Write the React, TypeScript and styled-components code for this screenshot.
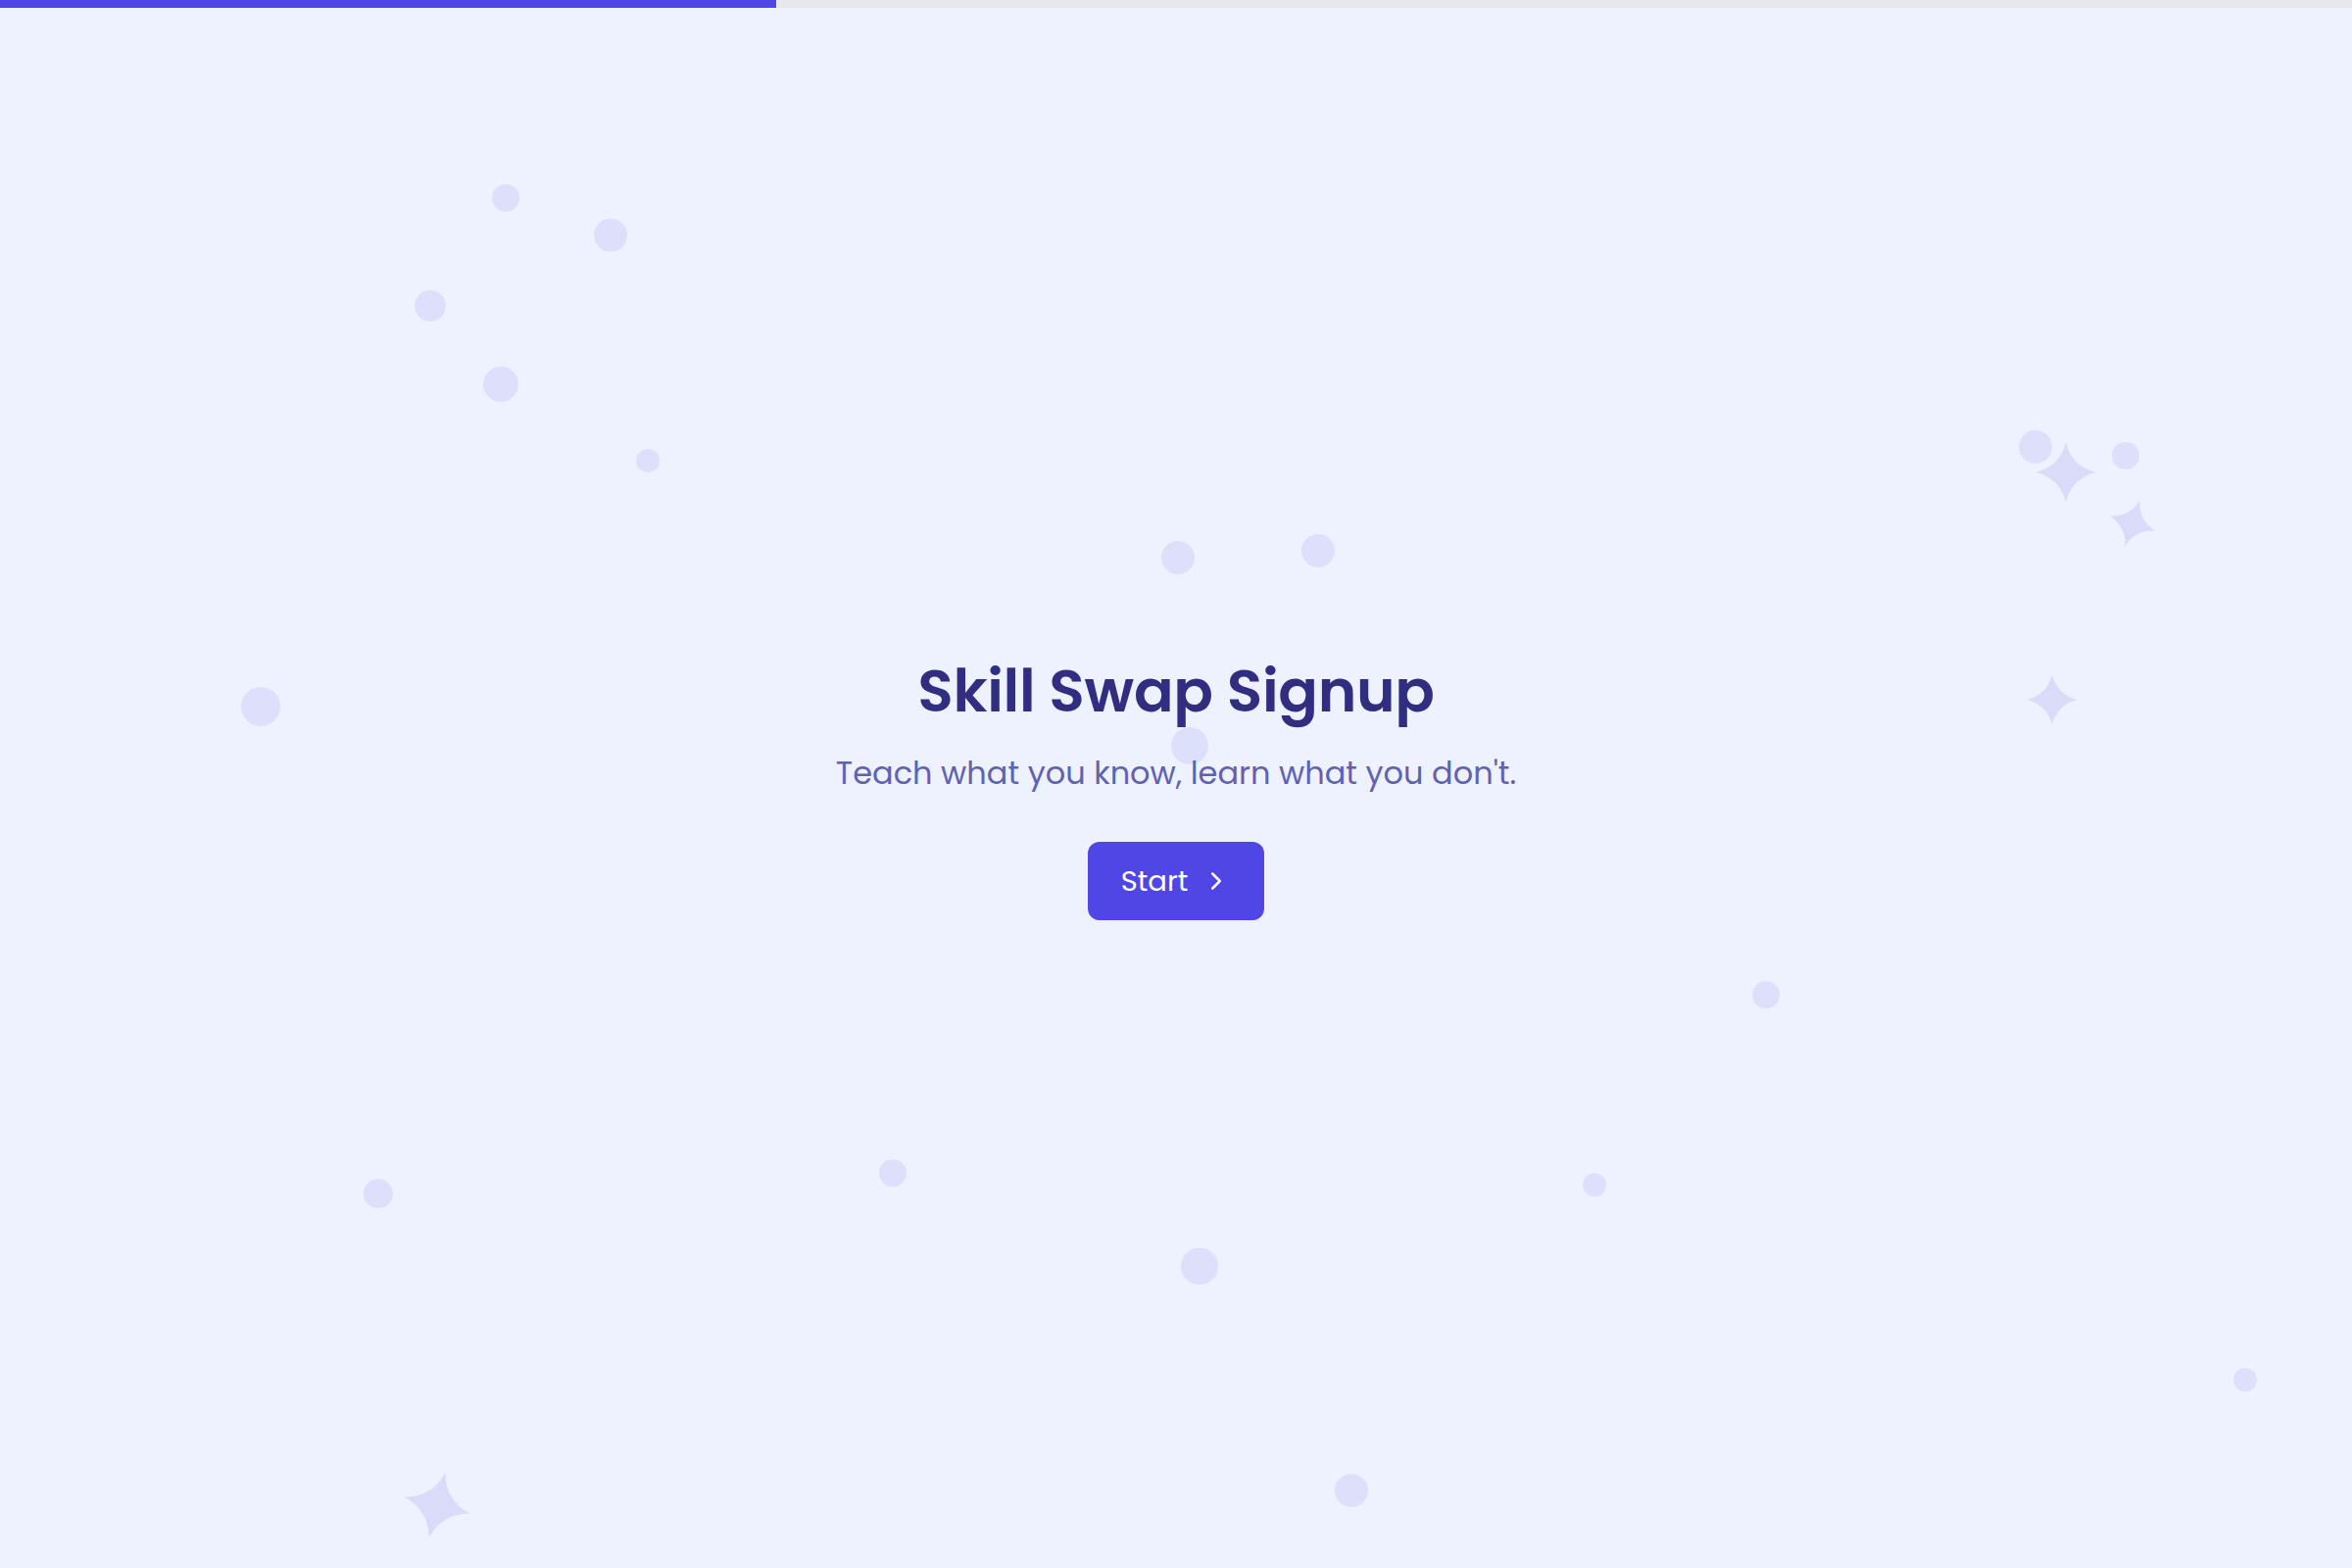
import React from "react";
import styled, { createGlobalStyle } from "styled-components";
import { ChevronRight } from "lucide-react";

const GlobalStyle = createGlobalStyle`
  html, body {
    margin: 0;
    padding: 0;
    background: #eef2ff;
  }
  body {
    font-family: "Poppins", "Inter", "Noto Sans", sans-serif;
  }
  * {
    box-sizing: border-box;
  }
`;

type Dot = { x: number; y: number; r: number };
type Spark = { x: number; y: number; s: number; rot: number };

const dots: Dot[] = [
  { x: 516, y: 202, r: 14 },
  { x: 623, y: 240, r: 17 },
  { x: 439, y: 312, r: 16 },
  { x: 511, y: 392, r: 18 },
  { x: 661, y: 470, r: 12 },
  { x: 1202, y: 569, r: 17 },
  { x: 1345, y: 562, r: 17 },
  { x: 266, y: 721, r: 20 },
  { x: 1214, y: 761, r: 19 },
  { x: 2077, y: 456, r: 17 },
  { x: 2169, y: 465, r: 14 },
  { x: 1802, y: 1015, r: 14 },
  { x: 386, y: 1218, r: 15 },
  { x: 911, y: 1197, r: 14 },
  { x: 1627, y: 1209, r: 12 },
  { x: 1224, y: 1292, r: 19 },
  { x: 2291, y: 1408, r: 12 },
  { x: 1379, y: 1521, r: 17 },
];

const sparks: Spark[] = [
  { x: 2108, y: 482, s: 62, rot: 0 },
  { x: 2176, y: 534, s: 50, rot: 18 },
  { x: 2094, y: 714, s: 52, rot: 0 },
  { x: 446, y: 1536, s: 70, rot: 14 },
];

const App = () => {
  return (
    <>
      <GlobalStyle />
      <Page>
        <ProgressTrack>
          <ProgressFill style={{ width: "33%" }} />
        </ProgressTrack>
        <Decor aria-hidden>
          {dots.map((d, i) => (
            <Bubble
              key={i}
              style={{
                left: d.x - d.r,
                top: d.y - d.r,
                width: d.r * 2,
                height: d.r * 2,
              }}
            />
          ))}
          {sparks.map((s, i) => (
            <Sparkle
              key={i}
              viewBox="0 0 24 24"
              style={{
                left: s.x - s.s / 2,
                top: s.y - s.s / 2,
                width: s.s,
                height: s.s,
                transform: `rotate(${s.rot}deg)`,
              }}
            >
              <path d="M12 0 C13.2 6 17.5 10.6 24 12 C17.5 13.4 13.2 18 12 24 C10.8 18 6.5 13.4 0 12 C6.5 10.6 10.8 6 12 0 Z" />
            </Sparkle>
          ))}
        </Decor>
        <Hero>
          <Title>Skill Swap Signup</Title>
          <Subtitle>Teach what you know, learn what you don't.</Subtitle>
          <StartButton type="button">
            Start
            <ChevronRight size={30} strokeWidth={2} />
          </StartButton>
        </Hero>
      </Page>
    </>
  );
};

export default App;

const Page = styled.div`
  position: relative;
  width: 100%;
  height: 100vh;
  overflow: hidden;
  background: #eef2ff;
  display: flex;
  flex-direction: column;
`;

const ProgressTrack = styled.div`
  height: 8px;
  width: 100%;
  background: #e5e7eb;
  flex-shrink: 0;
`;

const ProgressFill = styled.div`
  height: 100%;
  background: #4f46e5;
`;

const Decor = styled.div`
  position: absolute;
  inset: 0;
  pointer-events: none;
`;

const Bubble = styled.div`
  position: absolute;
  border-radius: 50%;
  background: #dde0fa;
`;

const Sparkle = styled.svg`
  position: absolute;
  fill: #d9dcf8;
`;

const Hero = styled.main`
  position: relative;
  flex: 1;
  display: flex;
  flex-direction: column;
  align-items: center;
  justify-content: center;
  text-align: center;
`;

const Title = styled.h1`
  margin: 0;
  font-size: 60px;
  line-height: 1.2;
  font-weight: 600;
  letter-spacing: -0.3px;
  color: #312e81;
`;

const Subtitle = styled.p`
  margin: 26px 0 0;
  font-size: 32px;
  line-height: 1.4;
  font-weight: 400;
  color: #6062b0;
`;

const StartButton = styled.button`
  margin-top: 48px;
  height: 80px;
  padding: 0 34px;
  display: flex;
  align-items: center;
  gap: 14px;
  border: none;
  border-radius: 12px;
  background: #4f46e5;
  color: #ffffff;
  font-family: inherit;
  font-size: 29px;
  font-weight: 400;
  cursor: pointer;
`;
